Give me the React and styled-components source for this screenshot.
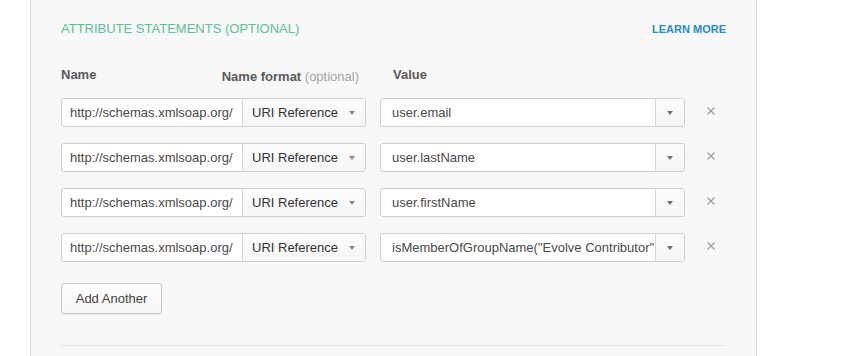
import styled, { createGlobalStyle } from "styled-components";

const GlobalStyle = createGlobalStyle`
  html, body {
    margin: 0;
    padding: 0;
    background: #fff;
    overflow: hidden;
  }
  body {
    font-family: "Liberation Sans", Arial, sans-serif;
    color: #444;
  }
`;

// layout
const Page = styled.div`
  display: flex;
  padding-left: 30px;
  height: 356px;
`;

const Panel = styled.section`
  box-sizing: border-box;
  width: 727px;
  min-height: 100%;
  padding: 21px 30px 0;
  background: #f8f8f8;
  border-left: 1px solid #dcdcdc;
  border-right: 1px solid #dcdcdc;
`;

const Header = styled.div`
  display: flex;
  justify-content: space-between;
  align-items: baseline;
`;

const Title = styled.h3`
  margin: 0;
  font-size: 13px;
  line-height: 16px;
  font-weight: 400;
  color: #5cbf93;
  text-transform: uppercase;
`;

const LearnMore = styled.a`
  font-size: 11px;
  font-weight: 700;
  color: #2a8ac6;
  text-decoration: none;
  text-transform: uppercase;
  cursor: pointer;
`;

const Grid = styled.div`
  display: grid;
  grid-template-columns: 305px 305px 1fr;
  column-gap: 14px;
  align-items: center;
`;

const Heads = styled(Grid)`
  margin-top: 30px;
  align-items: start;
`;

const HeadCell = styled.div`
  display: flex;
  justify-content: ${(p) => (p.$split ? "space-between" : "flex-start")};
  padding: ${(p) => (p.$indent ? "0 0 0 13px" : "0 7px 0 0")};
`;

const Label = styled.span`
  font-size: 13px;
  line-height: 16px;
  font-weight: 700;
  color: #5a5a5a;
  padding-top: ${(p) => (p.$low ? "2px" : "0")};
`;

const Optional = styled.span`
  font-weight: 400;
  color: #a3a3a3;
`;

const Rows = styled.div`
  display: flex;
  flex-direction: column;
  gap: 16px;
  margin-top: 13px;
`;

const Group = styled.div`
  display: flex;
  height: 29px;
  box-sizing: border-box;
  border: 1px solid #cfcfcf;
  border-radius: 3px;
  background: #fff;
  overflow: hidden;
`;

const Field = styled.div`
  box-sizing: border-box;
  width: ${(p) => p.$width || "auto"};
  flex: ${(p) => (p.$width ? "0 0 auto" : "1 1 0")};
  min-width: 0;
  display: flex;
  align-items: center;
  padding: 0 ${(p) => p.$pad || "8px"};
  font-size: 13px;
  color: #4a4a4a;
  white-space: nowrap;
  overflow: hidden;
`;

const Select = styled.div`
  box-sizing: border-box;
  flex: 1 1 auto;
  display: flex;
  align-items: center;
  justify-content: space-between;
  padding: 0 10px 0 9px;
  font-size: 13px;
  color: #333;
  background: linear-gradient(#fdfdfd, #f6f6f6);
  border-left: 1px solid #d6d6d6;
`;

const DropButton = styled.div`
  box-sizing: border-box;
  flex: 0 0 29px;
  display: flex;
  align-items: center;
  justify-content: center;
  background: linear-gradient(#fdfdfd, #f5f5f5);
  border-left: 1px solid #d6d6d6;
`;

const Caret = styled.span`
  width: 0;
  height: 0;
  border-left: 3px solid transparent;
  border-right: 3px solid transparent;
  border-top: 4px solid ${(p) => p.$color || "#8a8a8a"};
`;

const Remove = styled.button`
  justify-self: start;
  margin: 0 0 4px 7px;
  padding: 0;
  border: 0;
  background: none;
  width: 10px;
  height: 10px;
  display: flex;
  cursor: pointer;
`;

const AddButton = styled.button`
  box-sizing: border-box;
  margin-top: 21px;
  width: 101px;
  height: 31px;
  border: 1px solid #c9c9c9;
  border-radius: 3px;
  background: linear-gradient(#fdfdfd, #f7f7f7);
  box-shadow: 0 1px 1px rgba(0, 0, 0, 0.06);
  font-family: "Liberation Sans", Arial, sans-serif;
  font-size: 13px;
  color: #444;
  cursor: pointer;
`;

const Divider = styled.hr`
  margin: 31px 0 0;
  border: 0;
  border-top: 1px solid #e5e5e5;
`;

const statements = [
  "user.email",
  "user.lastName",
  "user.firstName",
  'isMemberOfGroupName("Evolve Contributor"',
];

const CloseIcon = () => (
  <svg width="10" height="10" viewBox="0 0 10 10">
    <path d="M1.5 1.5 L8.5 8.5 M8.5 1.5 L1.5 8.5" stroke="#9a9a9a" strokeWidth="1.1" />
  </svg>
);

const App = () => {
  return (
    <>
      <GlobalStyle />
      <Page>
        <Panel>
          <Header>
            <Title>Attribute Statements (optional)</Title>
            <LearnMore>Learn more</LearnMore>
          </Header>

          <Heads>
            <HeadCell $split>
              <Label>Name</Label>
              <Label $low>
                Name format <Optional>(optional)</Optional>
              </Label>
            </HeadCell>
            <HeadCell $indent>
              <Label>Value</Label>
            </HeadCell>
          </Heads>

          <Rows>
            {statements.map((value, index) => (
              <Grid key={index}>
                <Group>
                  <Field $width="180px">http://schemas.xmlsoap.org/</Field>
                  <Select>
                    URI Reference
                    <Caret />
                  </Select>
                </Group>
                <Group>
                  <Field $pad="11px">{value}</Field>
                  <DropButton>
                    <Caret $color="#707070" />
                  </DropButton>
                </Group>
                <Remove aria-label="remove">
                  <CloseIcon />
                </Remove>
              </Grid>
            ))}
          </Rows>

          <AddButton>Add Another</AddButton>
          <Divider />
        </Panel>
      </Page>
    </>
  );
};

export default App;
